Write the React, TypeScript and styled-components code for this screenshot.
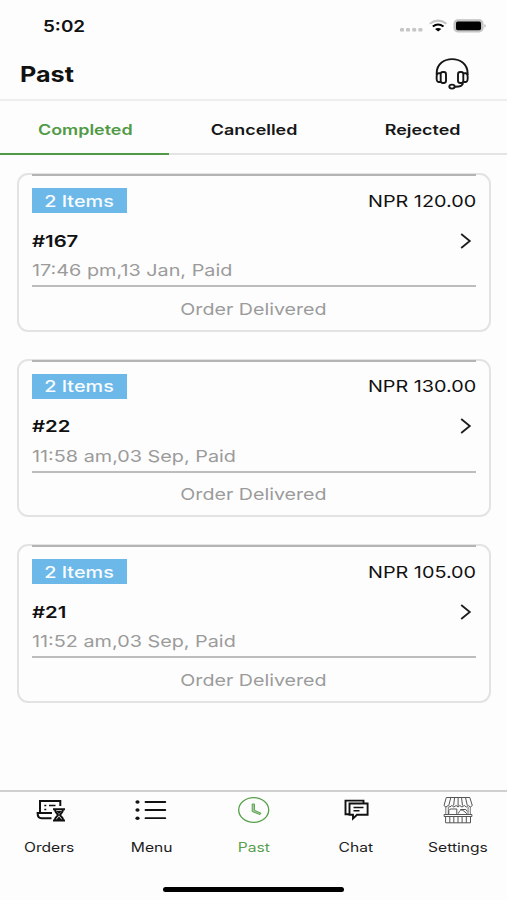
import React from "react";
import styled, { createGlobalStyle } from "styled-components";

const GlobalStyle = createGlobalStyle`
  * { box-sizing: border-box; }
  body { margin: 0; background: #fdfdfd; font-family: Inter, "Liberation Sans", sans-serif; color: #111; }
`;

const Screen = styled.div`
  width: 507px;
  height: 900px;
  display: flex;
  flex-direction: column;
  overflow: hidden;
  background: #fdfdfd;
`;

const Label = styled.span<{ $size: number; $weight?: number; $wide?: number; $origin?: string }>`
  display: inline-block;
  white-space: nowrap;
  font-size: ${(p) => p.$size}px;
  font-weight: ${(p) => p.$weight ?? 400};
  transform: scaleX(${(p) => p.$wide ?? 1.2});
  transform-origin: ${(p) => p.$origin ?? "center"};
`;

const StatusBar = styled.div`
  height: 50px;
  padding: 2px 21px 0 43px;
  display: flex;
  align-items: center;
  justify-content: space-between;
`;

const Header = styled.header`
  height: 51px;
  padding: 0 38px 2px 20px;
  display: flex;
  align-items: center;
  justify-content: space-between;
  border-bottom: 2px solid #ededed;
`;

const Tabs = styled.nav`
  height: 54px;
  display: grid;
  grid-template-columns: repeat(3, 1fr);
`;

const Tab = styled.div<{ $active?: boolean }>`
  display: flex;
  align-items: center;
  justify-content: center;
  padding-top: 5px;
  padding-left: 1px;
  color: ${(p) => (p.$active ? "#519a45" : "#161616")};
  border-bottom: 2px solid ${(p) => (p.$active ? "#519a45" : "#e4e4e4")};
`;

const List = styled.main`
  flex: 1;
  padding: 18px 16.5px 0 17px;
  display: flex;
  flex-direction: column;
  gap: 27.2px;
`;

const Card = styled.article`
  height: 158.5px;
  border: 2px solid #e3e3e3;
  border-radius: 11px;
  padding: 0 12.5px;
`;

const Rule = styled.div<{ $top?: boolean }>`
  height: 2px;
  background: ${(p) => (p.$top ? "#b4b4b4" : "#bdbdbd")};
  margin-top: ${(p) => (p.$top ? "-1px" : "0")};
`;

const Row = styled.div<{ $height: number }>`
  height: ${(p) => p.$height}px;
  display: flex;
  align-items: center;
  justify-content: space-between;
`;

const BadgeRow = styled(Row)`
  margin-top: 12px;
`;

const Badge = styled.div`
  width: 95.5px;
  height: 25px;
  display: flex;
  align-items: center;
  justify-content: center;
  background: #6cb8e9;
  color: #f8fcff;
`;

const Muted = styled.div<{ $height: number; $center?: boolean }>`
  height: ${(p) => p.$height}px;
  display: flex;
  align-items: center;
  justify-content: ${(p) => (p.$center ? "center" : "flex-start")};
  color: #9b9b9b;
`;

const Meta = styled(Muted)`
  align-items: flex-end;
  padding-bottom: 5px;
`;

const Chevron = styled.svg`
  margin-right: 4px;
`;

const BottomNav = styled.nav`
  height: 92px;
  border-top: 2px solid #cfcfcf;
  display: grid;
  grid-template-columns: repeat(5, 102.3px);
  justify-content: center;
`;

const NavItem = styled.div<{ $active?: boolean }>`
  display: flex;
  flex-direction: column;
  align-items: center;
  color: ${(p) => (p.$active ? "#57a04b" : "#1c1c1c")};
`;

const IconSlot = styled.div`
  height: 36px;
  display: flex;
  align-items: center;
`;

const NavText = styled.div`
  height: 38px;
  display: flex;
  align-items: center;
`;

const HomeArea = styled.div`
  height: 18px;
  flex: none;
`;

const HomeBar = styled.div`
  width: 181px;
  height: 5px;
  border-radius: 3px;
  background: #000;
  margin: 5px auto 0;
`;

const StatusIcons = () => (
  <svg width="90" height="18" viewBox="396 17 90 18">
    <g fill="#c6c6c6">
      <rect x="400" y="28" width="4" height="3.6" rx="1.2" />
      <rect x="406" y="28" width="4" height="3.6" rx="1.2" />
      <rect x="412.2" y="28" width="4" height="3.6" rx="1.2" />
      <rect x="418.4" y="28" width="4" height="3.6" rx="1.2" />
    </g>
    <path d="M429.8 23.8Q438 17.4 446.5 23.8" fill="none" stroke="#c4c4c4" strokeWidth="2" />
    <path d="M432.8 26.5Q438 22.5 443.5 26.5" fill="none" stroke="#000" strokeWidth="2.1" />
    <path d="M435 29Q438.2 27 441.3 29L438.2 31.5Z" fill="#000" />
    <rect x="454" y="19.8" width="29" height="12" rx="3.8" fill="#c4c4c4" stroke="#c4c4c4" strokeWidth="1.2" />
    <rect x="456" y="21.5" width="25" height="8.8" rx="1.8" fill="#000" />
    <path d="M484.5 24Q487 25.8 484.5 27.8Z" fill="#aaa" />
  </svg>
);

const HeadsetIcon = () => (
  <svg width="34" height="32" viewBox="435 58 34 32" fill="none" stroke="#161616" strokeWidth="1.9">
    <path d="M436.7 75V73C437 54.5 467.2 54.5 467.6 73V75" />
    <path d="M441 73.3H438.5C437 73.3 436.6 74.5 436.6 77.5S437 82 438.5 82H441" />
    <rect x="440.7" y="72" width="5.3" height="11" rx="2.2" />
    <rect x="458" y="72" width="5.3" height="11" rx="2.2" />
    <path d="M463.3 73.3H465.8C467.2 73.3 467.7 74.5 467.7 77.5S467.2 82 465.8 82H463.3M463 83C462.5 85.8 461 86.5 455 86.7" />
    <ellipse cx="452" cy="86.6" rx="2.7" ry="2" />
  </svg>
);

const OrdersIcon = () => (
  <svg width="34" height="24" viewBox="32 798 34 24" fill="none" stroke="#111" strokeWidth="2">
    <path d="M40 813V801H60.3V806" />
    <path d="M52 813H37.6C37.6 817 39 818.2 41.5 818.2H51.5" />
    <path d="M44.3 805.5H46.3M44.3 809.5H46.3M49 805.5H55.5" strokeWidth="1.7" />
    <path d="M53 809.3H65M53 820.5H65M55 809.5C55 813 58 813.8 58 815S55 817 55 820M63 809.5C63 813 60 813.8 60 815S63 817 63 820" strokeWidth="2" />
    <path d="M56 811H62L59 814ZM56 820L59 816.5L62 820Z" fill="#111" stroke="none" />
  </svg>
);

const MenuIcon = () => (
  <svg width="32" height="22" viewBox="135.5 798.5 32 22">
    <g fill="#111">
      <ellipse cx="138" cy="801.5" rx="2.1" ry="1.8" />
      <ellipse cx="138" cy="809.5" rx="2.1" ry="1.8" />
      <ellipse cx="138" cy="817.7" rx="2.1" ry="1.8" />
    </g>
    <path d="M146 801.5H165.8M146 809.5H165.8M146 817.7H165.8" stroke="#111" strokeWidth="1.8" strokeLinecap="round" />
  </svg>
);

const ClockIcon = () => (
  <svg width="33" height="28" viewBox="237 796 33 28" fill="none">
    <ellipse cx="253.7" cy="810" rx="15" ry="12.4" stroke="#57a04b" strokeWidth="1.3" />
    <path d="M252.2 804H254.4V810.3L261 813.2L260 814.6L252.2 811.5Z" stroke="#57a04b" strokeWidth="1" fill="#a9d1a2" />
  </svg>
);

const ChatIcon = () => (
  <svg width="26" height="22" viewBox="343 799 26 22" fill="none" stroke="#111" strokeWidth="1.9">
    <path d="M349 814.3H345.5V800.6H363.5V803.5" />
    <path d="M349.5 803.5H367.6V814.8H357L353 818.6V814.8H349.5Z" />
    <path d="M353.5 807.5H363.5M353.5 810.8H359.5" strokeWidth="1.4" />
  </svg>
);

const StoreIcon = () => (
  <svg width="30" height="28" viewBox="443.7 796 30 28" fill="none" stroke="#555" strokeWidth="1">
    <path d="M447 797.5H470.5L473 805.5Q471 808.5 469 805.5Q467 808.5 465 805.5Q462.5 808.5 460.5 805.5Q458.8 808.5 456.8 805.5Q454.5 808.5 452.5 805.5Q450.5 808.5 448.8 805.5Q446.5 808.5 444.7 805.5Z" />
    <path d="M451.5 797.5L449.5 805.5M455.3 797.5L454.3 805.5M458.8 797.5V806M462.2 797.5L463.2 805.5M466.2 797.5L468 805.5" />
    <path d="M446.5 807V814M471 807V814M449 807V814M468.8 807V814" strokeWidth=".8" />
    <path d="M449.5 814V810.5Q450.5 808.7 452 809H457.5V814M459 813.5Q461 808 464.5 811L468 814M461 809.5H466.5L468 811.5" />
    <path d="M444.8 814.5H472.6V816.5H444.8Z" />
    <path d="M446.3 817V822.8H471.2V817M450.5 817V822.8M454.5 817V822.8M458.7 817V822.8M462.8 817V822.8M467 817V822.8" />
  </svg>
);

const orders = [
  { id: "#167", price: "NPR 120.00", meta: "17:46 pm,13 Jan, Paid" },
  { id: "#22", price: "NPR 130.00", meta: "11:58 am,03 Sep, Paid" },
  { id: "#21", price: "NPR 105.00", meta: "11:52 am,03 Sep, Paid" },
];

const navItems = [
  { label: "Orders", Icon: OrdersIcon },
  { label: "Menu", Icon: MenuIcon },
  { label: "Past", Icon: ClockIcon, active: true },
  { label: "Chat", Icon: ChatIcon },
  { label: "Settings", Icon: StoreIcon },
];

export default function App() {
  return (
    <Screen>
      <GlobalStyle />
      <StatusBar>
        <Label $size={16} $weight={600} $wide={1.18} $origin="left">5:02</Label>
        <StatusIcons />
      </StatusBar>
      <Header>
        <Label $size={21.5} $weight={650} $wide={1.17} $origin="left">Past</Label>
        <HeadsetIcon />
      </Header>
      <Tabs>
        {["Completed", "Cancelled", "Rejected"].map((name, i) => (
          <Tab key={name} $active={i === 0}>
            <Label $size={14.5} $weight={600} $wide={1.235}>{name}</Label>
          </Tab>
        ))}
      </Tabs>
      <List>
        {orders.map((order) => (
          <Card key={order.id}>
            <Rule $top />
            <BadgeRow $height={25}>
              <Badge><Label $size={16.5} $weight={500}>2 Items</Label></Badge>
              <Label $size={16.5} $origin="right">{order.price}</Label>
            </BadgeRow>
            <Row $height={55}>
              <Label $size={16.5} $weight={600} $wide={1.23} $origin="left">{order.id}</Label>
              <Chevron width="13" height="18" viewBox="0 0 13 18" fill="none" stroke="#1c1c1c" strokeWidth="1.8">
                <path d="M2.2 2L10.8 9L2.2 16" />
              </Chevron>
            </Row>
            <Meta $height={17}><Label $size={16.5} $origin="left">{order.meta}</Label></Meta>
            <Rule />
            <Muted $height={43} $center><Label $size={16.5} $wide={1.19}>Order Delivered</Label></Muted>
          </Card>
        ))}
      </List>
      <BottomNav>
        {navItems.map(({ label, Icon, active }) => (
          <NavItem key={label} $active={active}>
            <IconSlot><Icon /></IconSlot>
            <NavText><Label $size={12.5} $wide={1.25}>{label}</Label></NavText>
          </NavItem>
        ))}
      </BottomNav>
      <HomeArea><HomeBar /></HomeArea>
    </Screen>
  );
}
